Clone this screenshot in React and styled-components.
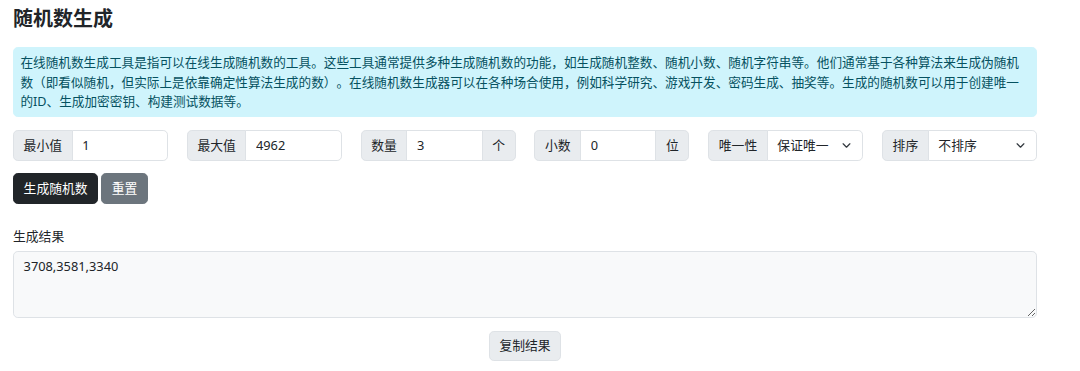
import styled, { createGlobalStyle } from 'styled-components';

const GlobalStyle = createGlobalStyle`
  body {
    margin: 0;
    background: #fff;
    font-family: "Noto Sans", "Noto Sans CJK SC", sans-serif;
    font-size: 12.8px;
    line-height: 1.5;
    color: #212529;
  }
  * { box-sizing: border-box; }
`;

const Page = styled.div`
  width: 1024px;
  margin-left: 13px;
  padding-top: 7px;
`;

const Title = styled.h4`
  margin: 0 0 16px;
  font-size: 20px;
  line-height: 24px;
  font-weight: 700;
  color: #212529;
`;

const Alert = styled.div`
  padding: 5.4px 6.4px;
  margin-bottom: 12.8px;
  background: #cff4fc;
  border: 1px solid #cff4fc;
  border-radius: 4.8px;
  color: #055160;
  font-size: 12.65px;
  line-height: 19.2px;
  text-spacing-trim: space-all;
`;

const Controls = styled.div`
  display: grid;
  grid-template-columns: repeat(6, 155px);
  column-gap: 18.8px;
  margin-bottom: 12.8px;
`;

const Group = styled.div`
  display: flex;
  height: 30.4px;
`;

const Addon = styled.span`
  display: flex;
  align-items: center;
  padding: 0 9.6px;
  background: #e9ecef;
  border: 1px solid #dee2e6;
  white-space: nowrap;
  color: #212529;
  border-radius: ${p => (p.$first ? '4.8px 0 0 4.8px' : '0 4.8px 4.8px 0')};
  margin-left: ${p => (p.$first ? '0' : '-1px')};
`;

const Field = styled.input`
  flex: 1;
  min-width: 0;
  margin-left: -1px;
  padding: 0 9.6px;
  border: 1px solid #dee2e6;
  border-radius: ${p => (p.$last ? '0 4.8px 4.8px 0' : '0')};
  font: inherit;
  color: #212529;
  background: #fff;
  outline: none;
`;

const SelectWrap = styled.div`
  position: relative;
  flex: 1;
  min-width: 0;
  display: flex;
  margin-left: -1px;
`;

const Select = styled.select`
  flex: 1;
  min-width: 0;
  appearance: none;
  padding: 0 28.8px 0 9.6px;
  border: 1px solid #dee2e6;
  border-radius: 0 4.8px 4.8px 0;
  font: inherit;
  color: #212529;
  background: #fff;
  outline: none;
`;

const Chevron = styled.svg`
  position: absolute;
  right: 12px;
  top: 50%;
  width: 9px;
  height: 9px;
  margin-top: -4.5px;
  pointer-events: none;
`;

const Actions = styled.div`
  display: flex;
  gap: 3px;
`;

const Button = styled.button`
  height: 30.4px;
  padding: 0 9.6px;
  font: inherit;
  border-radius: 4.8px;
  border: 1px solid ${p => p.$border || p.$bg};
  background: ${p => p.$bg};
  color: ${p => p.$color};
  cursor: pointer;
`;

const Result = styled.div`
  margin-top: 23px;
`;

const Label = styled.label`
  display: block;
  margin-bottom: 5px;
`;

const Output = styled.textarea`
  display: block;
  width: 100%;
  height: 67px;
  padding: 4.8px 9.6px;
  border: 1px solid #dee2e6;
  border-radius: 4.8px;
  background: #f8f9fa;
  font: inherit;
  line-height: 19.2px;
  color: #212529;
  resize: vertical;
  outline: none;
`;

const Center = styled.div`
  display: flex;
  justify-content: center;
  margin-top: 12.8px;
`;

const ChevronIcon = () => (
  <Chevron viewBox="0 0 16 16">
    <path d="m2 5 6 6 6-6" fill="none" stroke="#343a40" strokeWidth="2.2" strokeLinecap="round" strokeLinejoin="round" />
  </Chevron>
);

const App = () => (
  <>
    <GlobalStyle />
    <Page>
      <Title>随机数生成</Title>
      <Alert>
        在线随机数生成工具是指可以在线生成随机数的工具。这些工具通常提供多种生成随机数的功能，如生成随机整数、随机小数、随机字符串等。他们通常基于各种算法来生成伪随机数（即看似随机，但实际上是依靠确定性算法生成的数）。在线随机数生成器可以在各种场合使用，例如科学研究、游戏开发、密码生成、抽奖等。生成的随机数可以用于创建唯一的ID、生成加密密钥、构建测试数据等。
      </Alert>
      <Controls>
        <Group>
          <Addon $first>最小值</Addon>
          <Field defaultValue="1" $last />
        </Group>
        <Group>
          <Addon $first>最大值</Addon>
          <Field defaultValue="4962" $last />
        </Group>
        <Group>
          <Addon $first>数量</Addon>
          <Field defaultValue="3" />
          <Addon>个</Addon>
        </Group>
        <Group>
          <Addon $first>小数</Addon>
          <Field defaultValue="0" />
          <Addon>位</Addon>
        </Group>
        <Group>
          <Addon $first>唯一性</Addon>
          <SelectWrap>
            <Select defaultValue="unique">
              <option value="unique">保证唯一</option>
              <option value="any">不保证唯一</option>
            </Select>
            <ChevronIcon />
          </SelectWrap>
        </Group>
        <Group>
          <Addon $first>排序</Addon>
          <SelectWrap>
            <Select defaultValue="none">
              <option value="none">不排序</option>
              <option value="asc">升序</option>
              <option value="desc">降序</option>
            </Select>
            <ChevronIcon />
          </SelectWrap>
        </Group>
      </Controls>
      <Actions>
        <Button $bg="#212529" $color="#fff">生成随机数</Button>
        <Button $bg="#6c757d" $color="#fff">重置</Button>
      </Actions>
      <Result>
        <Label>生成结果</Label>
        <Output readOnly defaultValue="3708,3581,3340" />
      </Result>
      <Center>
        <Button $bg="#e9ecef" $border="#dee2e6" $color="#212529">复制结果</Button>
      </Center>
    </Page>
  </>
);

export default App;
